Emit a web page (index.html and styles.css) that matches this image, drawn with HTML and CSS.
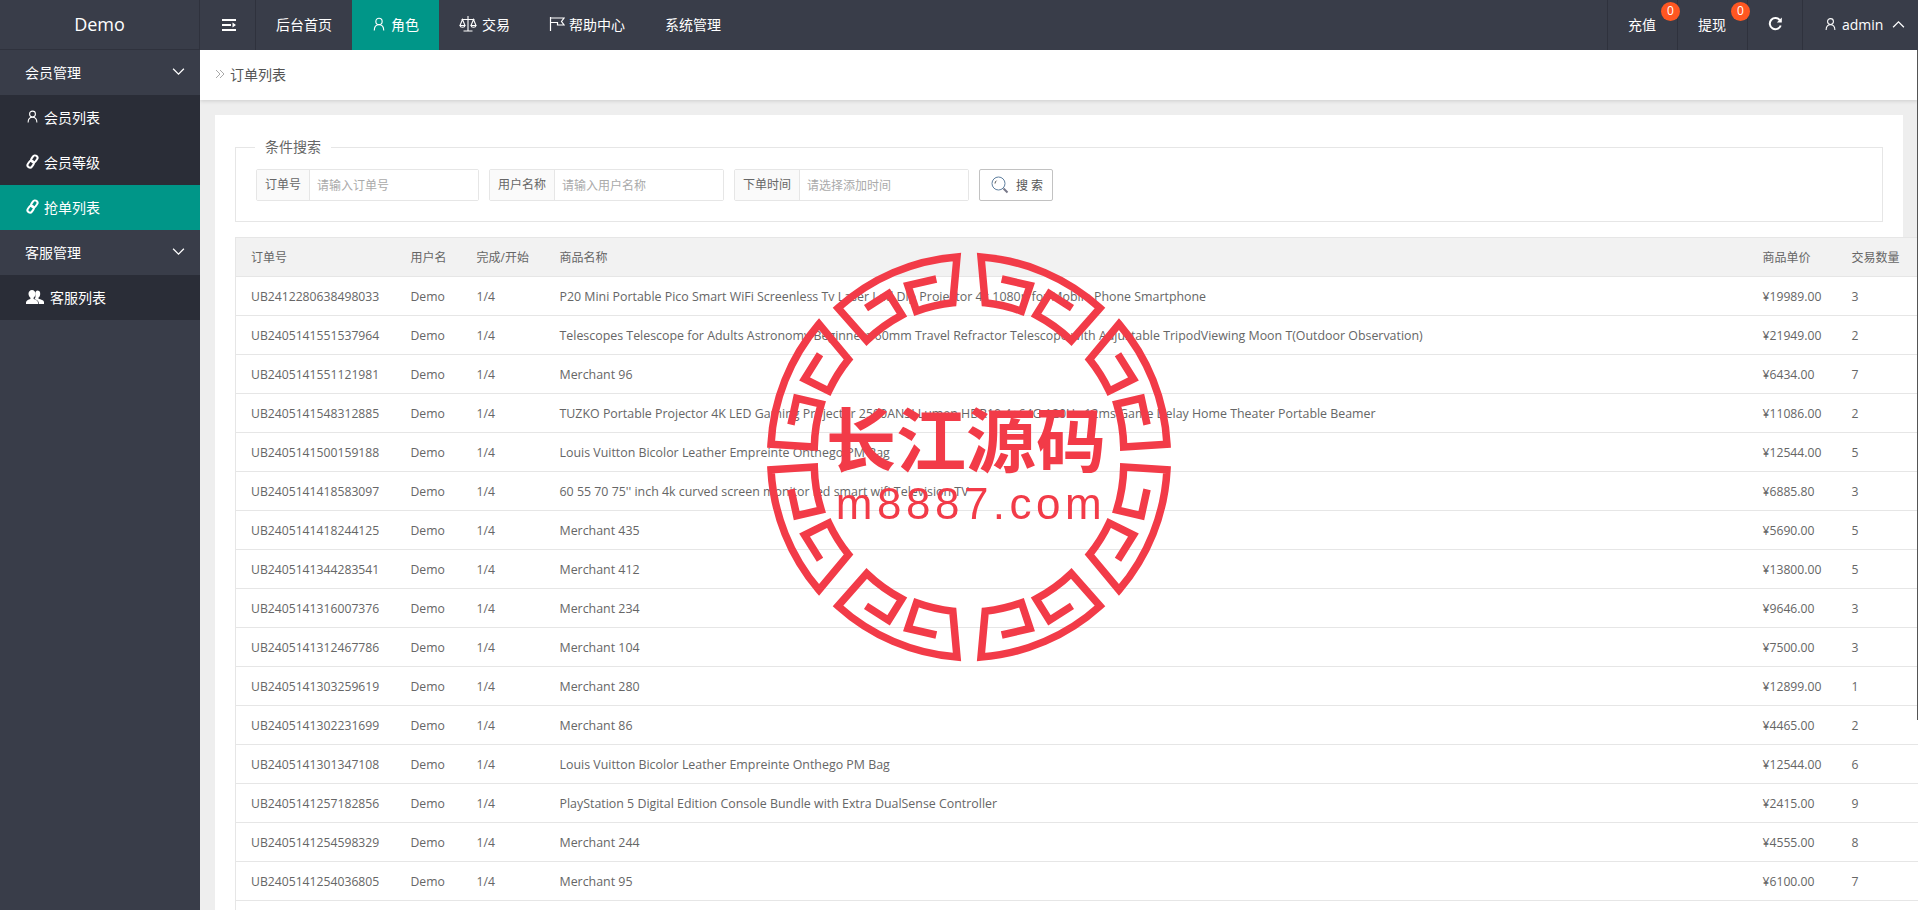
FILE: index.html
```html
<!DOCTYPE html>
<html lang="zh-CN">
<head>
<meta charset="utf-8">
<title>订单列表</title>
<link rel="stylesheet" href="styles.css">
</head>
<body>
<svg class="defs" width="0" height="0" aria-hidden="true">
  <defs>
    <symbol id="i-user" viewBox="0 0 16 16"><circle cx="8" cy="5" r="3.6"/><path d="M2.6 15.5c0-4 2-6.6 5.4-6.6s5.4 2.600 5.400 6.600"/></symbol>
    <symbol id="i-link" viewBox="0 0 16 16"><g transform="rotate(35 8 8)"><rect x="5" y="-0.500" width="6" height="9" rx="3"/><rect x="5" y="7.500" width="6" height="9" rx="3"/></g></symbol>
    <symbol id="i-chev" viewBox="0 0 14 10"><path d="M1 2l6 6 6-6"/></symbol>
    <symbol id="i-up" viewBox="0 0 14 10"><path d="M1 8l6-6 6 6"/></symbol>
  </defs>
</svg>

<header class="topbar">
  <div class="logo">Demo</div>
  <nav class="nav">
    <a class="nav-item nav-toggle">
      <svg class="ico-menu" viewBox="0 0 14 12"><path d="M0 0h14v2H0zM0 10h14v2H0zM0 5h9v2H0zM10.500 3.500L14 6l-3.500 2.500z"/></svg>
    </a>
    <a class="nav-item">后台首页</a>
    <a class="nav-item is-active"><svg class="ico ico-14"><use href="#i-user"/></svg>角色</a>
    <a class="nav-item"><svg class="ico ico-18" viewBox="0 0 18 18"><path d="M9 1v15M4.500 16h9M2.500 4.500h13M3.500 4.500L1 10.500h5zM14.500 4.500L12 10.500h5zM1 10.500c.3 2.400 4.700 2.400 5 0M12 10.500c.3 2.400 4.700 2.400 5 0"/></svg>交易</a>
    <a class="nav-item nav-tight"><svg class="ico ico-16" viewBox="0 0 16 16"><path d="M1.500 1v14M1.500 2h13.500l-2.500 3.500 2.500 3.500H8.500V6.500h-7"/></svg>帮助中心</a>
    <a class="nav-item">系统管理</a>
  </nav>
  <div class="nav-right">
    <a class="nav-cell nav-money">充值<span class="badge">0</span></a>
    <a class="nav-cell nav-money">提现<span class="badge">0</span></a>
    <a class="nav-cell"><svg class="ico-refresh" viewBox="0 0 14 14"><path d="M12 3.400A5.600 5.600 0 1 0 12.700 8.500"/><path class="fill" d="M13.800 0.500v5h-5z"/></svg></a>
    <a class="nav-cell nav-user"><svg class="ico ico-user"><use href="#i-user"/></svg>admin<svg class="ico ico-chev"><use href="#i-up"/></svg></a>
  </div>
</header>

<div class="layout">
  <aside class="sidebar">
    <div class="side-group">会员管理<svg class="ico ico-chev"><use href="#i-chev"/></svg></div>
    <a class="side-item"><svg class="ico ico-side"><use href="#i-user"/></svg>会员列表</a>
    <a class="side-item"><svg class="ico ico-side ico-bold"><use href="#i-link"/></svg>会员等级</a>
    <a class="side-item is-active"><svg class="ico ico-side ico-bold"><use href="#i-link"/></svg>抢单列表</a>
    <div class="side-group">客服管理<svg class="ico ico-chev"><use href="#i-chev"/></svg></div>
    <a class="side-item"><svg class="ico-users" viewBox="0 0 18 15"><path d="M11 1.500a3.200 3.200 0 0 1 3.200 3.400c0 1.500-.7 3-1.700 3.600v1.200c1.800.6 5.500 1.400 5.500 3.300V15h-5.300v-1.500c0-1.700-2-2.800-4.200-3.600.9-.8 1.100-2 .9-3.500C9 4 9.500 2 11 1.500z"/><path d="M6 1a3.500 3.500 0 0 1 3.500 3.800c0 1.700-.8 3.300-1.900 3.900v1.300c2 .6 4.400 1.600 4.400 3.500V15H0v-1.500c0-1.900 2.400-2.900 4.400-3.500V8.700C3.300 8.100 2.500 6.500 2.500 4.800A3.500 3.500 0 0 1 6 1z"/></svg>客服列表</a>
  </aside>

  <main class="main">
    <div class="crumb">
      <svg class="ico-crumb" viewBox="0 0 10 10"><path d="M1 1l4 4-4 4M5 1l4 4-4 4"/></svg>
      <span>订单列表</span>
    </div>
    <div class="content">
      <section class="card">
        <fieldset class="search">
          <legend>条件搜索</legend>
          <div class="search-row">
            <label class="field field-a"><span class="field-label">订单号</span><input class="field-input" placeholder="请输入订单号"></label>
            <label class="field field-b"><span class="field-label">用户名称</span><input class="field-input" placeholder="请输入用户名称"></label>
            <label class="field field-b"><span class="field-label">下单时间</span><input class="field-input" placeholder="请选择添加时间"></label>
            <button class="btn" type="button"><svg class="ico-search" viewBox="0 0 18 18"><circle cx="7.500" cy="7.500" r="6.500"/><path class="arc" d="M4 7.500a3.500 3.500 0 0 1 1.500-2.800"/><path class="handle" d="M12.500 12.500l4 4"/></svg>搜 索</button>
          </div>
        </fieldset>
        <table class="orders">
          <colgroup><col class="c1"><col class="c2"><col class="c3"><col class="c4"><col class="c5"><col class="c6"></colgroup>
          <thead><tr><th>订单号</th><th>用户名</th><th>完成/开始</th><th>商品名称</th><th>商品单价</th><th>交易数量</th></tr></thead>
          <tbody>
            <tr><td>UB2412280638498033</td><td>Demo</td><td>1/4</td><td class="name">P20 Mini Portable Pico Smart WiFi Screenless Tv Laser Led Dlp Projector 4k 1080p for Mobile Phone Smartphone</td><td>¥19989.00</td><td>3</td></tr>
            <tr><td>UB2405141551537964</td><td>Demo</td><td>1/4</td><td class="name">Telescopes Telescope for Adults Astronomy Beginners 60mm Travel Refractor Telescope with Adjustable TripodViewing Moon T(Outdoor Observation)</td><td>¥21949.00</td><td>2</td></tr>
            <tr><td>UB2405141551121981</td><td>Demo</td><td>1/4</td><td class="name">Merchant 96</td><td>¥6434.00</td><td>7</td></tr>
            <tr><td>UB2405141548312885</td><td>Demo</td><td>1/4</td><td class="name">TUZKO Portable Projector 4K LED Gaming Projector 2500ANSI Lumen HDR10 4+64G 120Hz 12ms Game Delay Home Theater Portable Beamer</td><td>¥11086.00</td><td>2</td></tr>
            <tr><td>UB2405141500159188</td><td>Demo</td><td>1/4</td><td class="name">Louis Vuitton Bicolor Leather Empreinte Onthego PM Bag</td><td>¥12544.00</td><td>5</td></tr>
            <tr><td>UB2405141418583097</td><td>Demo</td><td>1/4</td><td class="name">60 55 70 75'' inch 4k curved screen monitor led smart wifi Television TV</td><td>¥6885.80</td><td>3</td></tr>
            <tr><td>UB2405141418244125</td><td>Demo</td><td>1/4</td><td class="name">Merchant 435</td><td>¥5690.00</td><td>5</td></tr>
            <tr><td>UB2405141344283541</td><td>Demo</td><td>1/4</td><td class="name">Merchant 412</td><td>¥13800.00</td><td>5</td></tr>
            <tr><td>UB2405141316007376</td><td>Demo</td><td>1/4</td><td class="name">Merchant 234</td><td>¥9646.00</td><td>3</td></tr>
            <tr><td>UB2405141312467786</td><td>Demo</td><td>1/4</td><td class="name">Merchant 104</td><td>¥7500.00</td><td>3</td></tr>
            <tr><td>UB2405141303259619</td><td>Demo</td><td>1/4</td><td class="name">Merchant 280</td><td>¥12899.00</td><td>1</td></tr>
            <tr><td>UB2405141302231699</td><td>Demo</td><td>1/4</td><td class="name">Merchant 86</td><td>¥4465.00</td><td>2</td></tr>
            <tr><td>UB2405141301347108</td><td>Demo</td><td>1/4</td><td class="name">Louis Vuitton Bicolor Leather Empreinte Onthego PM Bag</td><td>¥12544.00</td><td>6</td></tr>
            <tr><td>UB2405141257182856</td><td>Demo</td><td>1/4</td><td class="name">PlayStation 5 Digital Edition Console Bundle with Extra DualSense Controller</td><td>¥2415.00</td><td>9</td></tr>
            <tr><td>UB2405141254598329</td><td>Demo</td><td>1/4</td><td class="name">Merchant 244</td><td>¥4555.00</td><td>8</td></tr>
            <tr><td>UB2405141254036805</td><td>Demo</td><td>1/4</td><td class="name">Merchant 95</td><td>¥6100.00</td><td>7</td></tr>
            <tr><td></td><td></td><td></td><td></td><td></td><td></td></tr>
          </tbody>
        </table>
      </section>
    </div>
    <div class="scroll-thumb"></div>
  </main>
</div>

<svg class="stamp" viewBox="-215 -215 430 430" aria-label="长江源码 m8887.com">
  <defs>
    <path id="key" d="M32.700-178L61.100-171.500L52.500-145.800A155 155 0 0 0 16.200-154.200L12-200.100A200.500 200.500 0 0 1 131-149L102.300-116.500A155 155 0 0 0 67.100-141.900L80.400-163.300L103-148.800"/>
    <g id="quad"><use href="#key"/><use href="#key" transform="rotate(45)"/></g>
  </defs>
  <g class="ring">
    <use href="#quad"/>
    <use href="#quad" transform="scale(-1 1)"/>
    <use href="#quad" transform="scale(1 -1)"/>
    <use href="#quad" transform="scale(-1 -1)"/>
  </g>
  <text class="stamp-cn" x="-3" y="10" text-anchor="middle">长江源码</text>
  <text class="stamp-en" x="2" y="62" text-anchor="middle">m8887.com</text>
</svg>
</body>
</html>
```
FILE: styles.css
```css
* { box-sizing: border-box; }
html, body { margin: 0; height: 100%; overflow: hidden; }
body {
  position: relative;
  font-family: "Open Sans", "Noto Sans CJK SC", sans-serif;
  font-size: 12px;
  color: #666;
  background: #eee;
}
a { color: inherit; text-decoration: none; }
.defs { position: absolute; }

.ico { fill: none; stroke: currentColor; stroke-width: 1.3; flex: none; }
.ico-14 { width: 14px; height: 14px; margin-right: 5px; }
.ico-18 { width: 18px; height: 18px; margin-right: 5px; stroke-width: 1.1; }
.ico-16 { width: 16px; height: 16px; margin-right: 4px; stroke-width: 1.2; }

.topbar {
  display: flex;
  height: 50px;
  background: #393d49;
  color: #fff;
  font-size: 14px;
}
.logo {
  flex: none;
  width: 200px;
  height: 50px;
  line-height: 49px;
  text-align: center;
  font-size: 18px;
  border-right: 1px solid #2f323d;
  border-bottom: 1px solid #2f323d;
}
.nav { display: flex; flex: 1; }
.nav-item {
  display: flex;
  align-items: center;
  padding: 0 20px 2px;
}
.nav-item.is-active { background: #009688; }
.nav-tight { padding-left: 19px; }
.nav-toggle { width: 56px; padding: 0 0 0 22px; border-right: 1px solid #2f323d; }
.ico-menu { width: 14px; height: 12px; fill: #fff; }
.nav-right { display: flex; }
.nav-cell {
  position: relative;
  display: flex;
  align-items: center;
  padding: 0 20px 2px;
  border-left: 1px solid #2f323d;
}
.nav-money { padding-right: 21px; }
.badge {
  position: absolute;
  top: 2px;
  right: -3px;
  width: 19px;
  height: 19px;
  border-radius: 50%;
  background: #ff5722;
  font-size: 12px;
  line-height: 18px;
  text-align: center;
  z-index: 1;
}
.ico-refresh { width: 14px; height: 14px; fill: none; stroke: #fff; stroke-width: 2; }
.ico-refresh .fill { fill: #fff; stroke: none; }
.nav-user { width: 116px; padding: 0 0 2px 21px; }
.ico-user { width: 13px; height: 14px; margin-right: 5px; }
.ico-chev { width: 13px; height: 9px; stroke-width: 1.4; }
.nav-user .ico-chev { margin-left: 9px; }

.layout { display: flex; height: 860px; }
.sidebar {
  flex: none;
  width: 200px;
  background: #393d49;
  color: #fff;
  font-size: 14px;
}
.side-group {
  display: flex;
  align-items: center;
  justify-content: space-between;
  height: 45px;
  padding: 0 15px 2px 25px;
}
.side-item {
  display: flex;
  align-items: center;
  height: 45px;
  padding: 0 0 2px 26px;
  background: #2a2d37;
}
.side-item.is-active { background: #009688; }
.ico-side { width: 13px; height: 15px; margin-right: 5px; }
.ico-bold { stroke-width: 2.5; }
.ico-users { width: 18px; height: 15px; margin-right: 6px; fill: #fff; }

.main {
  position: relative;
  flex: 1;
  min-width: 0;
  overflow: hidden;
}
.crumb {
  position: relative;
  display: flex;
  align-items: center;
  height: 50px;
  padding: 0 0 2px 15px;
  background: #fff;
  font-size: 14px;
  color: #555;
  box-shadow: 0 1px 4px rgba(0, 0, 0, .14);
}
.ico-crumb { width: 10px; height: 10px; margin-right: 5px; fill: none; stroke: #aaa; stroke-width: 1; }
.scroll-thumb {
  position: absolute;
  top: 0;
  right: 0;
  width: 1px;
  height: 670px;
  background: #555;
}
.content { padding: 15px 15px 0; }
.card {
  height: 900px;
  padding: 22px 20px 0;
  background: #fff;
}
.search {
  margin: 0;
  height: 85px;
  padding: 12px 20px 20px;
  border: 1px solid #e6e6e6;
}
.search legend {
  margin-left: -1px;
  padding: 0 10px;
  font-size: 14px;
  line-height: 20px;
  color: #666;
}
.search-row { display: flex; align-items: center; }
.field { display: flex; height: 32px; margin-right: 10px; border: 1px solid #e6e6e6; border-radius: 2px; }
.field-a { width: 223px; }
.field-b { width: 235px; }
.field-label {
  flex: none;
  padding: 0 8px;
  line-height: 30px;
  color: #666;
  background: #fafafa;
  border-right: 1px solid #e6e6e6;
}
.field-input {
  flex: 1;
  min-width: 0;
  padding: 0 7px;
  border: 0;
  outline: 0;
  font: inherit;
  color: #666;
  background: #fff;
}
.field-input::placeholder { color: #aaa; opacity: 1; }
.btn {
  display: flex;
  align-items: center;
  width: 74px;
  height: 32px;
  padding: 0 0 0 11px;
  border: 1px solid #c2c2c2;
  border-radius: 2px;
  background: #fff;
  font: inherit;
  color: #555;
}
.ico-search { width: 18px; height: 18px; margin-right: 7px; fill: none; stroke: #5f7f9f; stroke-width: 1; }
.ico-search .arc { stroke: #555; }
.ico-search .handle { stroke: #778; stroke-width: 2; }

.orders {
  table-layout: fixed;
  width: 1690px;
  margin-top: 15px;
  border-collapse: collapse;
  background: #fff;
  border-left: 1px solid #e6e6e6;
}
.c1 { width: 160px; }
.c2 { width: 66px; }
.c3 { width: 83px; }
.c4 { width: 1203px; }
.c5 { width: 89px; }
.c6 { width: 89px; }
.orders th, .orders td {
  height: 39px;
  padding: 0 15px;
  text-align: left;
  font-weight: 400;
  white-space: nowrap;
  border-top: 1px solid #e6e6e6;
  border-bottom: 1px solid #e6e6e6;
  overflow: visible;
}
.orders td { font-size: 12.2px; }
.orders td.name { font-size: 12.4px; }
.orders th { background: #f2f2f2; }

.stamp {
  position: absolute;
  left: 754px;
  top: 242px;
  width: 430px;
  height: 430px;
  pointer-events: none;
  filter: blur(.4px);
}
.ring { fill: none; stroke: #f23b48; stroke-width: 7.5; stroke-linejoin: miter; }
.stamp-cn {
  fill: #f23b48;
  font-family: "Noto Sans CJK SC", sans-serif;
  font-size: 70px;
  font-weight: 700;
}
.stamp-en {
  fill: #f23b48;
  font-family: "Liberation Sans", sans-serif;
  font-size: 44px;
  letter-spacing: 4.5px;
}
```
